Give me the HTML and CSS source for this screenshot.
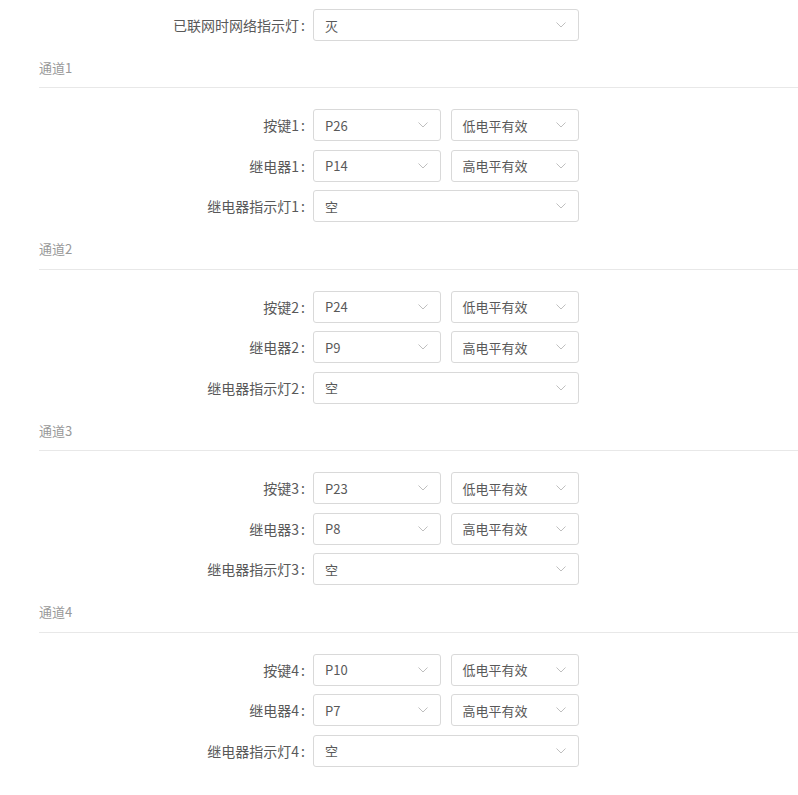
FILE: index.html
```html
<!DOCTYPE html>
<html lang="zh">
<head>
<meta charset="utf-8">
<link rel="stylesheet" href="styles.css">
</head>
<body>
<div class="form">
  <div class="row">
    <label class="label">已联网时网络指示灯</label>
    <div class="select wide"><span>灭</span><svg class="arrow" viewBox="0 0 10 6"><polyline points="0.5,0.5 5,5 9.5,0.5"/></svg></div>
  </div>

  <section class="group">
    <div class="group-title">通道1</div>
    <div class="group-body">
      <div class="row">
        <label class="label">按键1</label>
        <div class="select small"><span>P26</span><svg class="arrow" viewBox="0 0 10 6"><polyline points="0.5,0.5 5,5 9.5,0.5"/></svg></div>
        <div class="select small"><span>低电平有效</span><svg class="arrow" viewBox="0 0 10 6"><polyline points="0.5,0.5 5,5 9.5,0.5"/></svg></div>
      </div>
      <div class="row">
        <label class="label">继电器1</label>
        <div class="select small"><span>P14</span><svg class="arrow" viewBox="0 0 10 6"><polyline points="0.5,0.5 5,5 9.5,0.5"/></svg></div>
        <div class="select small"><span>高电平有效</span><svg class="arrow" viewBox="0 0 10 6"><polyline points="0.5,0.5 5,5 9.5,0.5"/></svg></div>
      </div>
      <div class="row">
        <label class="label">继电器指示灯1</label>
        <div class="select wide"><span>空</span><svg class="arrow" viewBox="0 0 10 6"><polyline points="0.5,0.5 5,5 9.5,0.5"/></svg></div>
      </div>
    </div>
  </section>

  <section class="group">
    <div class="group-title">通道2</div>
    <div class="group-body">
      <div class="row">
        <label class="label">按键2</label>
        <div class="select small"><span>P24</span><svg class="arrow" viewBox="0 0 10 6"><polyline points="0.5,0.5 5,5 9.5,0.5"/></svg></div>
        <div class="select small"><span>低电平有效</span><svg class="arrow" viewBox="0 0 10 6"><polyline points="0.5,0.5 5,5 9.5,0.5"/></svg></div>
      </div>
      <div class="row">
        <label class="label">继电器2</label>
        <div class="select small"><span>P9</span><svg class="arrow" viewBox="0 0 10 6"><polyline points="0.5,0.5 5,5 9.5,0.5"/></svg></div>
        <div class="select small"><span>高电平有效</span><svg class="arrow" viewBox="0 0 10 6"><polyline points="0.5,0.5 5,5 9.5,0.5"/></svg></div>
      </div>
      <div class="row">
        <label class="label">继电器指示灯2</label>
        <div class="select wide"><span>空</span><svg class="arrow" viewBox="0 0 10 6"><polyline points="0.5,0.5 5,5 9.5,0.5"/></svg></div>
      </div>
    </div>
  </section>

  <section class="group">
    <div class="group-title">通道3</div>
    <div class="group-body">
      <div class="row">
        <label class="label">按键3</label>
        <div class="select small"><span>P23</span><svg class="arrow" viewBox="0 0 10 6"><polyline points="0.5,0.5 5,5 9.5,0.5"/></svg></div>
        <div class="select small"><span>低电平有效</span><svg class="arrow" viewBox="0 0 10 6"><polyline points="0.5,0.5 5,5 9.5,0.5"/></svg></div>
      </div>
      <div class="row">
        <label class="label">继电器3</label>
        <div class="select small"><span>P8</span><svg class="arrow" viewBox="0 0 10 6"><polyline points="0.5,0.5 5,5 9.5,0.5"/></svg></div>
        <div class="select small"><span>高电平有效</span><svg class="arrow" viewBox="0 0 10 6"><polyline points="0.5,0.5 5,5 9.5,0.5"/></svg></div>
      </div>
      <div class="row">
        <label class="label">继电器指示灯3</label>
        <div class="select wide"><span>空</span><svg class="arrow" viewBox="0 0 10 6"><polyline points="0.5,0.5 5,5 9.5,0.5"/></svg></div>
      </div>
    </div>
  </section>

  <section class="group">
    <div class="group-title">通道4</div>
    <div class="group-body">
      <div class="row">
        <label class="label">按键4</label>
        <div class="select small"><span>P10</span><svg class="arrow" viewBox="0 0 10 6"><polyline points="0.5,0.5 5,5 9.5,0.5"/></svg></div>
        <div class="select small"><span>低电平有效</span><svg class="arrow" viewBox="0 0 10 6"><polyline points="0.5,0.5 5,5 9.5,0.5"/></svg></div>
      </div>
      <div class="row">
        <label class="label">继电器4</label>
        <div class="select small"><span>P7</span><svg class="arrow" viewBox="0 0 10 6"><polyline points="0.5,0.5 5,5 9.5,0.5"/></svg></div>
        <div class="select small"><span>高电平有效</span><svg class="arrow" viewBox="0 0 10 6"><polyline points="0.5,0.5 5,5 9.5,0.5"/></svg></div>
      </div>
      <div class="row">
        <label class="label">继电器指示灯4</label>
        <div class="select wide"><span>空</span><svg class="arrow" viewBox="0 0 10 6"><polyline points="0.5,0.5 5,5 9.5,0.5"/></svg></div>
      </div>
    </div>
  </section>
</div>
</body>
</html>
```

FILE: styles.css
```css
html, body {
  margin: 0;
  padding: 0;
  background: #ffffff;
}

body {
  font-family: "Noto Sans CJK SC", "Noto Sans", sans-serif;
  color: #595959;
}

.form {
  padding-top: 9px;
}

.row {
  display: flex;
  align-items: center;
  height: 32px;
  gap: 9.5px;
}

.group-body .row + .row {
  margin-top: 8.5px;
}

.label {
  width: 305px;
  margin-right: -1.5px;
  flex: none;
  text-align: right;
  font-size: 14px;
  line-height: 32px;
  color: #595959;
  white-space: nowrap;
}

.label::after {
  content: ":";
  margin: 0 0 0 2px;
}

.select {
  box-sizing: border-box;
  height: 32px;
  border: 1px solid #d9d9d9;
  border-radius: 3px;
  display: flex;
  align-items: center;
  justify-content: space-between;
  padding: 0 12px 0 11px;
  font-size: 13px;
  color: #595959;
  background: #fff;
  flex: none;
}

.select.wide {
  width: 266px;
}

.select.small {
  width: 128px;
}

.arrow {
  width: 10px;
  height: 6px;
  fill: none;
  stroke: #bfbfbf;
  stroke-width: 1;
}

.group-title {
  margin: 17px 0 0 39px;
  padding-bottom: 9.4px;
  border-bottom: 1px solid #e8e8e8;
  font-size: 13px;
  line-height: 20px;
  color: #999999;
}

.group-body {
  padding-top: 21px;
}
```
